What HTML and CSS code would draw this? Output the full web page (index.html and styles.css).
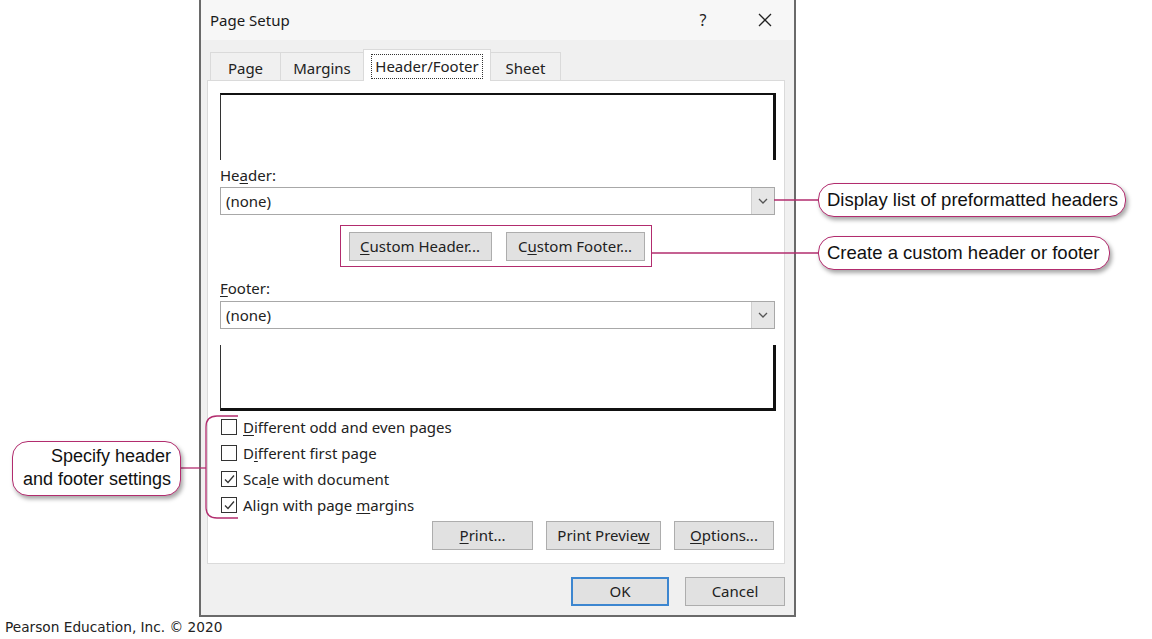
FILE: index.html
```html
<!DOCTYPE html>
<html lang="en">
<head>
<meta charset="utf-8">
<title>Page Setup</title>
<link rel="stylesheet" href="styles.css">
</head>
<body>
<div class="page">
  <div class="dialog">
    <div class="titlebar">
      <span class="title">Page Setup</span>
      <span class="help">?</span>
      <span class="close"><svg width="14" height="14" viewBox="0 0 14 14"><path d="M1 1 L13 13 M13 1 L1 13" stroke="#222" stroke-width="1.3" fill="none"/></svg></span>
    </div>
    <div class="tabs">
      <div class="tab tab-page">Page</div>
      <div class="tab tab-margins">Margins</div>
      <div class="tab tab-active"><span class="focus">Header/Footer</span></div>
      <div class="tab tab-sheet">Sheet</div>
    </div>
    <div class="panel">
      <div class="preview preview-header"></div>
      <div class="label">He<u>a</u>der:</div>
      <div class="combo">
        <span class="combo-text">(none)</span>
        <span class="combo-btn"><svg width="10" height="6" viewBox="0 0 10 6"><path d="M1 1 L5 5 L9 1" stroke="#555" stroke-width="1.3" fill="none"/></svg></span>
      </div>
      <div class="custom-row">
        <div class="custom-group">
          <div class="btn btn-ch"><span><u>C</u>ustom Header...</span></div>
          <div class="btn btn-cf"><span>C<u>u</u>stom Footer...</span></div>
        </div>
      </div>
      <div class="label label-footer"><u>F</u>ooter:</div>
      <div class="combo combo-footer">
        <span class="combo-text">(none)</span>
        <span class="combo-btn"><svg width="10" height="6" viewBox="0 0 10 6"><path d="M1 1 L5 5 L9 1" stroke="#555" stroke-width="1.3" fill="none"/></svg></span>
      </div>
      <div class="preview preview-footer"></div>
      <div class="checks">
        <div class="check"><span class="box"></span><span><u>D</u>ifferent odd and even pages</span></div>
        <div class="check"><span class="box"></span><span>D<u>i</u>fferent first page</span></div>
        <div class="check"><span class="box"><svg width="13" height="13" viewBox="0 0 13 13"><path d="M2 6.5 L5 9.5 L11 2.5" stroke="#333" stroke-width="1.3" fill="none"/></svg></span><span>Sca<u>l</u>e with document</span></div>
        <div class="check"><span class="box"><svg width="13" height="13" viewBox="0 0 13 13"><path d="M2 6.5 L5 9.5 L11 2.5" stroke="#333" stroke-width="1.3" fill="none"/></svg></span><span>Align with page <u>m</u>argins</span></div>
      </div>
      <div class="actions">
        <div class="btn btn-print"><span><u>P</u>rint...</span></div>
        <div class="btn btn-preview"><span>Print Previe<u>w</u></span></div>
        <div class="btn btn-options"><span><u>O</u>ptions...</span></div>
      </div>
    </div>
    <div class="dialog-buttons">
      <div class="btn btn-ok"><span>OK</span></div>
      <div class="btn btn-cancel"><span>Cancel</span></div>
    </div>
  </div>
  <div class="copyright">Pearson Education, Inc. © 2020</div>

  <svg class="connectors" width="1152" height="639" viewBox="0 0 1152 639">
    <path d="M774 200 H818" stroke="#b22c6e" stroke-width="1.3" fill="none"/>
    <path d="M651 253 H818" stroke="#b22c6e" stroke-width="1.3" fill="none"/>
    <path d="M181 468 H206" stroke="#b22c6e" stroke-width="1.3" fill="none"/>
    <path d="M238 416 H217 Q206 416 206 427 V507 Q206 518 217 518 H238" stroke="#b22c6e" stroke-width="1.3" fill="none"/>
  </svg>
  <div class="callout callout-list">Display list of preformatted headers</div>
  <div class="callout callout-custom">Create a custom header or footer</div>
  <div class="callout callout-settings">Specify header<br>and footer settings</div>
</div>
</body>
</html>
```

FILE: styles.css
```css
* { box-sizing: border-box; }
html, body { margin: 0; padding: 0; background: #fff; }
.page {
  position: relative;
  width: 1152px;
  height: 639px;
  overflow: hidden;
  font-family: "Noto Sans", "Open Sans", sans-serif;
  color: #222;
}
u { text-decoration: underline; text-underline-offset: 2px; text-decoration-thickness: 1px; }

.dialog {
  margin-left: 199px;
  width: 597px;
  height: 617px;
  border: 2px solid #6a6a6a;
  border-top: 0;
  background: #f0f0f0;
  display: flex;
  flex-direction: column;
}
.titlebar {
  height: 40px;
  display: flex;
  align-items: center;
  padding-right: 6px;
  background: #f7f7f7;
}
.title { padding-left: 9px; font-size: 15px; color: #1a1a1a; }
.help {
  margin-left: auto;
  width: 46px;
  text-align: center;
  font-size: 16px;
  color: #222;
}
.close {
  width: 46px;
  margin-left: 16px;
  display: flex;
  justify-content: center;
  align-items: center;
}

.tabs {
  height: 40px;
  display: flex;
  align-items: flex-end;
  padding-left: 9px;
}
.tab {
  height: 28px;
  padding-top: 3px;
  border: 1px solid #dadada;
  border-bottom: 0;
  border-left: 0;
  display: flex;
  align-items: center;
  justify-content: center;
  font-size: 15px;
  color: #222;
  background: #f0f0f0;
}
.tab-page { width: 71px; border-left: 1px solid #dadada; }
.tab-margins { width: 83px; }
.tab-sheet { width: 70px; }
.tab-active {
  width: 128px;
  height: 32px;
  padding-top: 2px;
  margin-bottom: -1px;
  background: #fff;
  position: relative;
  z-index: 1;
  border-left: 1px solid #dadada;
  margin-left: -1px;
}
.focus {
  border: 1px dotted #333;
  padding: 1px 3px 1px;
  line-height: 21px;
}

.panel {
  margin-left: 6px;
  width: 578px;
  height: 484px;
  background: #fff;
  border: 1px solid #dadada;
  padding: 12px 9px 13px 12px;
  display: flex;
  flex-direction: column;
}
.preview { width: 556px; }
.preview-header {
  height: 67px;
  border-top: 2px solid #111;
  border-left: 1px solid #333;
  border-right: 3px solid #111;
}
.preview-footer {
  height: 66px;
  margin-top: 16px;
  border-left: 1px solid #333;
  border-right: 3px solid #111;
  border-bottom: 3px solid #111;
}
.label {
  margin-top: 5px;
  height: 20px;
  line-height: 20px;
  font-size: 15px;
}
.label-footer { margin-top: 11px; }
.combo {
  margin-top: 2px;
  width: 555px;
  height: 28px;
  border: 1px solid #a8a8a8;
  display: flex;
  align-items: stretch;
}
.combo-footer { margin-top: 3px; }
.combo-text {
  flex: 1;
  padding-left: 5px;
  font-size: 15px;
  line-height: 26px;
}
.combo-btn {
  width: 23px;
  background: #e6e6e6;
  border-left: 1px solid #cfcfcf;
  display: flex;
  align-items: center;
  justify-content: center;
}

.btn {
  height: 29px;
  padding-bottom: 2px;
  background: #e1e1e1;
  border: 1px solid #adadad;
  display: flex;
  align-items: center;
  justify-content: center;
  font-size: 15px;
  color: #222;
}
.custom-row {
  margin-top: 10px;
  display: flex;
  justify-content: center;
  padding-right: 4px;
}
.custom-group {
  border: 1px solid #b22c6e;
  padding: 6px 6px 5px 8px;
  display: flex;
  gap: 14px;
}
.btn-ch { width: 143px; }
.btn-cf { width: 139px; }

.checks {
  margin-top: 3px;
  display: flex;
  flex-direction: column;
}
.check {
  height: 26px;
  display: flex;
  align-items: center;
  font-size: 15px;
}
.box {
  width: 16px;
  height: 16px;
  margin-left: 1px;
  margin-right: 6px;
  border: 1px solid #333;
  display: flex;
  align-items: center;
  justify-content: center;
}

.actions {
  margin-top: 3px;
  display: flex;
  justify-content: flex-end;
  gap: 13px;
  padding-right: 1px;
}
.btn-print { width: 101px; }
.btn-preview { width: 115px; }
.btn-options { width: 100px; }

.dialog-buttons {
  padding-top: 13px;
  padding-right: 9px;
  display: flex;
  justify-content: flex-end;
  gap: 16px;
}
.btn-ok { width: 98px; border: 2px solid #3c86d0; }
.btn-cancel { width: 100px; }

.copyright {
  margin-top: 1px;
  padding-left: 5px;
  font-family: "DejaVu Sans", Verdana, sans-serif;
  font-size: 13.7px;
  line-height: 18px;
  color: #222;
}

.connectors {
  position: absolute;
  left: 0;
  top: 0;
  pointer-events: none;
}
.callout {
  position: absolute;
  background: #fff;
  border: 1.5px solid #b22c6e;
  border-radius: 16px;
  box-shadow: 2px 3px 4px rgba(0, 0, 0, 0.35);
  font-family: "Liberation Sans", Arial, sans-serif;
  font-size: 18.5px;
  color: #111;
  white-space: nowrap;
}
.callout-list {
  left: 818px;
  top: 183px;
  width: 308px;
  height: 34px;
  line-height: 31px;
  padding-left: 8px;
}
.callout-custom {
  left: 818px;
  top: 236px;
  width: 292px;
  height: 34px;
  line-height: 31px;
  padding-left: 8px;
}
.callout-settings {
  left: 12px;
  top: 441px;
  width: 169px;
  height: 55px;
  font-size: 18px;
  line-height: 23px;
  padding: 3px 9px 0 0;
  text-align: right;
}
```
